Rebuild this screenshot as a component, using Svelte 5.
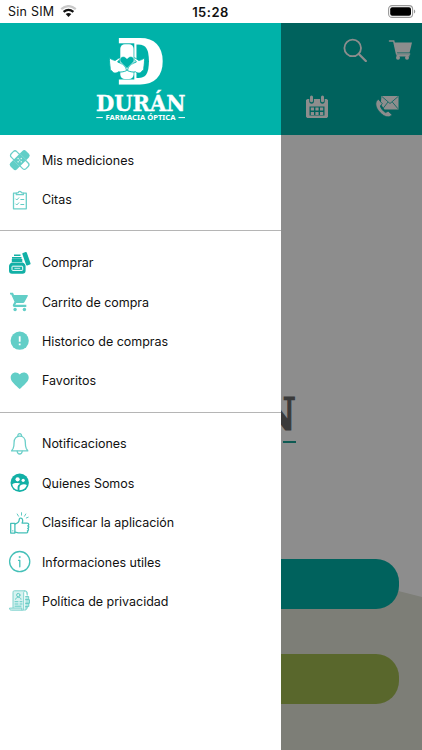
<script>
  // Secciones del menú lateral
  const sections = [
    [
      { icon: "bandage", label: "Mis mediciones" },
      { icon: "clipboard", label: "Citas" }
    ],
    [
      { icon: "jar", label: "Comprar" },
      { icon: "cart", label: "Carrito de compra" },
      { icon: "alert", label: "Historico de compras" },
      { icon: "heart", label: "Favoritos" }
    ],
    [
      { icon: "bell", label: "Notificaciones" },
      { icon: "people", label: "Quienes Somos" },
      { icon: "thumb", label: "Clasificar la aplicación" },
      { icon: "info", label: "Informaciones utiles" },
      { icon: "policy", label: "Política de privacidad" }
    ]
  ];
</script>

{#snippet menuIcon(name)}
  <svg class="icon" viewBox="0 0 24 24" width="24" height="24" aria-hidden="true">
    {#if name === "bandage"}
      <g transform="translate(-0.3 0.1) rotate(45 12 12)">
        <rect x="1.5" y="8.1" width="21" height="7.8" rx="2.4" class="line bold light-line" />
      </g>
      <g transform="translate(-0.3 0.1) rotate(-45 12 12)">
        <rect x="1" y="7.4" width="22" height="9.2" rx="2.6" class="light" />
        <path d="M7.3 7.4v9.2M16.7 7.4v9.2" stroke="#8fdcd7" stroke-width="0.6" />
        <g fill="#e8faf8">
          <circle cx="12" cy="9.8" r="0.7" /><circle cx="12" cy="14.2" r="0.7" />
          <circle cx="9.8" cy="12" r="0.7" /><circle cx="14.2" cy="12" r="0.7" />
          <circle cx="12" cy="12" r="0.6" />
        </g>
      </g>
    {:else if name === "clipboard"}
      <path d="M8.2 5.2H5.5v15.6h12.8V5.2h-2.7" class="line bold light-line" />
      <path d="M8.3 6.7V5.1l2-.5c.2-1.700 2.900-1.700 3.100 0l2 .5v1.600z" class="line bold light-line" />
      <path d="M7.800 11l1 1 2-2.200M7.800 16l1 1 2-2.200M12.800 11.500h3M12.800 16.500h3" class="line" />
    {:else if name === "jar"}
      <g class="dark">
        <path d="M6 3.500h6.500v1.400H6zM4 6h9.500v1.700H4z" />
        <path d="M3.800 8h10.500v3H3.800z" />
        <path d="M3.800 11.500h11c1.900.9 2.800 2.200 2.800 4v4.200c0 1.900-1.200 3-3 3H4c-1.900 0-3-1.100-3-3v-4.200c0-1.800.9-3.100 2.800-4z" />
        <rect x="16.100" y="1.100" width="4.700" height="13.200" rx="1" transform="rotate(-19 18.500 7.700)" />
      </g>
      <rect x="4" y="15.200" width="10.700" height="4.200" rx="0.700" fill="none" stroke="#fff" />
      <path d="M6.400 17.300h5.800" stroke="#fff" stroke-width="0.800" />
    {:else if name === "cart"}
      <path d="M2 2.800h3l1 2.300h13.200c.5 0 .8.5.6 1l-3.300 6c-.3.600-.8.900-1.500.9H8.300l-1 1.800h11V17H6.400c-1.300 0-2-1.400-1.400-2.500l1.500-2.700L3.200 4.400H2z" class="light" />
      <circle cx="7.100" cy="19.500" r="1.700" class="light" />
      <circle cx="16.400" cy="19.500" r="1.700" class="light" />
    {:else if name === "alert"}
      <circle cx="11.700" cy="11.700" r="9.100" class="light" />
      <path d="M10.800 7.300h1.800v5.500h-1.800zM10.800 14.400h1.800v1.800h-1.800z" fill="#fff" />
    {:else if name === "heart"}
      <path d="M11.700 20.100l-1.300-1.200C5.700 14.700 2.700 12 2.700 8.600c0-2.800 2.100-5 4.900-5 1.600 0 3.100.8 4.100 2 1-1.200 2.500-2 4.100-2 2.800 0 4.900 2.200 4.900 5 0 3.400-3 6.100-7.700 10.300z" class="light" />
    {:else if name === "bell"}
      <path d="M5.100 16.500c.8-1.600 1-3.500 1-6.200 0-3.500 2.100-6.100 5.600-6.100s5.600 2.600 5.600 6.100c0 2.700.2 4.600 1 6.200l1.500 2.400H3.600z" class="line bold light-line" />
      <path d="M9.900 4.400c-.8-3.600 4.400-3.600 3.600 0M9.200 19.200c.4 3.700 4.600 3.700 5 0" class="line bold light-line" />
    {:else if name === "people"}
      <circle cx="11.700" cy="11.700" r="9.200" class="dark" />
      <g fill="#fff">
        <circle cx="9.600" cy="8.300" r="2.100" />
        <circle cx="15.200" cy="9.300" r="1.600" />
        <path d="M4.300 13.200c1.300-1.600 6.400-1.700 8-.5-1.900.8-2.700 2-2.700 3.700v2.500c-2.900-.7-5.100-2.900-5.300-5.700z" />
        <path d="M11.500 19.200v-2.800c0-3.300 5.400-4 7.300-2.400-.8 3-3.600 5.300-7.300 5.200z" />
      </g>
    {:else if name === "thumb"}
      <path d="M2.700 12.300h4.200v9.800H2.700z" class="line bold" />
      <path d="M7 13c3.300-.7 4.200-2.400 4.300-4.700.1-1.900 3.400-1.500 3.400 1.100 0 1.100-.3 2-.6 2.700h5c2.100 0 2.100 2.500.6 2.700 1.500.2 1.400 2.400 0 2.600 1.200.3 1 2.300-.3 2.500.7.600.4 2-1 2H11c-1.600 0-2-.8-4-.8" class="line bold" />
      <path d="M13.500 1.700v2.500M9.200 3l1.300 2.200M17.800 3l-1.300 2.200M18.300 7l1.900-.8M4.800 19.500v.6" class="line" />
    {:else if name === "info"}
      <circle cx="11.700" cy="11.600" r="10.100" class="line bold" />
      <circle cx="11.700" cy="7.100" r="1.100" class="light" />
      <path d="M10.500 10.300h1.300v6.500" class="line bold" />
    {:else}
      <path d="M5 19V3.300C5 2.300 5.500 1.800 6.500 1.800h10.700c-1.100.3-1.500 1-1.500 2v17.400H3.300c-1.300 0-1.800-.8-1.800-2.100h12.300v2.100" fill="#d7f2f0" stroke="#74cec8" stroke-width="0.900" />
      <circle cx="10.300" cy="6.100" r="1.700" class="line" />
      <path d="M7.600 10.200c.3-2.700 5.100-2.700 5.400 0M7 12.700h3M12 12.700h2M7 15h3M12 15h2M7 17.200h6" class="line" />
      <path d="M17.200 2c1.300 0 2 .7 2 2v2.500M17.300 7.500h3.400v3h-3.400M17.400 10.700h4.100v3.600h-4.100M17.300 14.400h3.500v3.200h-3.500M17.300 17.700h2c0 2-.7 3.300-2.900 3.500" fill="#b0e6e2" stroke="#65cbc4" stroke-width="0.900" />
    {/if}
  </svg>
{/snippet}

<div class="phone">
  <div class="status">
    <div class="carrier">
      <span>Sin SIM</span>
      <svg width="17" height="13" viewBox="0 0 17 13" aria-hidden="true">
        <path d="M1.200 4.200Q8.500-2 15.800 4.200" fill="none" stroke="#c9c9c9" stroke-width="2.200" />
        <path d="M3.600 6.800q4.900-4 9.800 0" fill="none" stroke="#111" stroke-width="2.200" />
        <path d="M5.700 9.100q2.800-2.100 5.600 0L8.500 12z" fill="#111" />
      </svg>
    </div>
    <div class="time">15:28</div>
    <svg class="battery" width="28" height="13" viewBox="0 0 28 13" aria-hidden="true">
      <rect x="0.600" y="0.600" width="24" height="11.800" rx="3.500" fill="none" stroke="#999" stroke-width="1.100" />
      <rect x="2.200" y="2.200" width="20.800" height="8.600" rx="2" fill="#000" />
      <path d="M26 4.500c1.700.6 1.700 3.400 0 4z" fill="#999" />
    </svg>
  </div>

  <div class="app">
    <div class="page">
      <header class="topbar">
        <div class="tools">
          <svg width="24" height="24" viewBox="0 0 24 24" aria-hidden="true">
            <circle cx="9.700" cy="9.900" r="8.300" fill="none" stroke="#fff" stroke-width="1.800" />
            <path d="M15.800 16l7 7" stroke="#fff" stroke-width="2.300" stroke-linecap="round" />
          </svg>
          <svg width="24" height="24" viewBox="0 0 24 24" aria-hidden="true">
            <path d="M1.500 2.900h4.200L8.600 16h13" fill="none" stroke="#fff" stroke-width="1.500" stroke-linecap="round" />
            <path d="M5.900 4.400h18.100l-2.400 10.200H8.200z" fill="#fff" />
            <path d="M8.500 16.500h13v2h-13z" fill="#fff" />
            <circle cx="10" cy="19.800" r="2" fill="#fff" />
            <circle cx="19" cy="19.800" r="2" fill="#fff" />
          </svg>
        </div>
        <div class="tools second">
          <svg width="22" height="24" viewBox="0 0 22 24" aria-hidden="true">
            <path d="M1.500 4h1.800v2.500c0 3 4.600 3 4.600 0V4h6.200v2.500c0 3 4.600 3 4.600 0V4h1.800L22 5v16.800l-1.200 1.200H1.200L0 21.800V5z" fill="#fff" />
            <rect x="4" y="0.600" width="3" height="6.700" rx="1.500" fill="#fff" />
            <rect x="15" y="0.600" width="3" height="6.700" rx="1.500" fill="#fff" />
            <path d="M3.500 11.500h15v9h-15z" class="teal" />
            <path d="M4.800 12.500h3.200v3H4.800zM9.400 12.500h3.200v3H9.400zM14 12.500h3.200v3H14zM4.800 17h3.200v3H4.800zM9.400 17h3.200v3H9.400zM14 17h3.200v3H14z" fill="#fff" />
          </svg>
          <svg width="24" height="24" viewBox="0 0 24 24" aria-hidden="true">
            <path d="M6.500 1h17v13.500h-14L5.700 9z" fill="#fff" />
            <path d="M7 1.600l8 6.900 8-6.900M7.800 13.800L13 7M23 13.800L17.300 7" fill="none" class="seam" />
            <path d="M3.300 4.200C-.5 6.700.1 12.500 5 17.500c4.500 4.700 9.300 5.800 12 2.200l-3.800-3.500-2.700 1.400C7.400 15.500 6 13.300 5.300 11l2-2.300z" fill="#fff" class="seam" />
          </svg>
        </div>
      </header>

      <main class="home">
        <svg class="hill" viewBox="0 0 422 200" preserveAspectRatio="none" aria-hidden="true">
          <path d="M0 200V34Q120 0 240 10Q330 22 422 47V200z" fill="#e2e4d7" />
        </svg>
        <svg class="brand" width="172" height="54" viewBox="0 0 172 54">
          <text x="1" y="37.500" textLength="170" lengthAdjust="spacingAndGlyphs">DURÁN</text>
          <path d="M1 50h13M158 50h13" stroke="#1aa497" stroke-width="1.800" />
        </svg>
        <div class="actions">
          <div class="action"></div>
          <div class="action green"></div>
        </div>
      </main>
    </div>

    <div class="scrim"></div>

    <nav class="drawer">
      <div class="drawer-head">
        <svg width="96" height="92" viewBox="93 34 96 92">
          <text class="mark" transform="translate(117.800 83.200) scale(0.880 1)" x="0" y="0">D</text>
          <path d="M114 43.300h20.300v36.200H114z" fill="#00b2a9" />
          <rect x="120.300" y="44.300" width="13.300" height="34.700" rx="4.500" fill="#fff" />
          <!-- manos que sostienen el corazón -->
          <g fill="#fff" stroke="#00b2a9" stroke-width="0.900">
            <path d="M109.800 57.800c1.500 1.600 3.300 2.300 5.400 2.600l3.700-2.400c.9-.4 1.700.5 1 1.300l-2.300 2.700 2.900 1.200c3.200 1.400 5.500 3.700 6.100 7.400-3.300 1.500-6 1.600-8.100 1.200-2.800 2.200-5.600 1.200-6.600-.8-1.300-.4-1.900-1.600-1.700-3 -.3-3.500-1.100-6.400-.4-10.200z" />
            <path d="M144.200 57.800c-1.500 1.600-3.300 2.300-5.400 2.600l-3.700-2.400c-.9-.4-1.700.5-1 1.300l2.300 2.700-2.900 1.200c-3.200 1.400-5.500 3.700-6.100 7.400 3.300 1.500 6 1.600 8.100 1.200 2.800 2.200 5.600 1.200 6.600-.8 1.300-.4 1.900-1.600 1.700-3 .3-3.500 1.100-6.400.4-10.200z" />
          </g>
          <path d="M127 68.500l-6-5.900c-3-3.500 1-8 4.600-5.200l1.400 1.400 1.400-1.400c3.600-2.800 7.600 1.700 4.600 5.200z" fill="#00b2a9" stroke="#fff" stroke-width="0.500" />
          <text class="name" x="96" y="111" textLength="89.500" lengthAdjust="spacingAndGlyphs">DURÁN</text>
          <text class="tag" x="105.500" y="120.200" textLength="70" lengthAdjust="spacingAndGlyphs">FARMACIA ÓPTICA</text>
          <path d="M96.300 117.600h6.500M178.500 117.600h6.500" stroke="#fff" stroke-width="1" />
        </svg>
      </div>
      {#each sections as items}
        <ul class="section">
          {#each items as item}
            <li>
              {@render menuIcon(item.icon)}
              <span>{item.label}</span>
            </li>
          {/each}
        </ul>
      {/each}
    </nav>
  </div>
</div>

<style>
  :global(body) {
    margin: 0;
  }
  .phone {
    display: flex;
    flex-direction: column;
    width: 422px;
    height: 750px;
    overflow: hidden;
    background: #fff;
    color: #111;
    font-family: Inter, "Liberation Sans", sans-serif;
  }
  svg {
    display: block;
    flex: none;
  }

  /* Barra de estado */
  .status {
    display: grid;
    grid-template-columns: 1fr auto 1fr;
    align-items: center;
    height: 23px;
    padding: 0 6px 0 8px;
    box-sizing: border-box;
    font-size: 12.5px;
  }
  .carrier {
    display: flex;
    align-items: center;
    gap: 6px;
    letter-spacing: 0.25px;
  }
  .time {
    margin-left: -3px;
    font-size: 13px;
    font-weight: 600;
    letter-spacing: 0.5px;
  }
  .battery {
    justify-self: end;
  }

  .app {
    position: relative;
    flex: 1;
  }
  .page {
    display: flex;
    flex-direction: column;
    height: 100%;
  }

  /* Cabecera de la página */
  .topbar {
    height: 112px;
    background: #00b2a9;
  }
  .tools {
    display: flex;
    justify-content: flex-end;
    gap: 21px;
    padding: 15px 10px 0 0;
  }
  .second {
    gap: 47px;
    padding: 33px 23px 0 0;
  }
  .teal {
    fill: #00b2a9;
  }
  .seam {
    stroke: #00b2a9;
    stroke-width: 0.8;
  }

  .home {
    display: flex;
    flex-direction: column;
    justify-content: space-between;
    position: relative;
    flex: 1;
  }
  .hill {
    position: absolute;
    left: 0;
    bottom: 0;
    width: 100%;
    height: 200px;
  }
  .brand {
    align-self: center;
    margin-top: 257px;
    overflow: visible;
  }
  .brand text {
    font: bold 44px "DejaVu Serif", serif;
    fill: #69696a;
    stroke: #69696a;
    stroke-width: 1.2;
  }
  .actions {
    display: flex;
    flex-direction: column;
    gap: 45px;
    position: relative;
    padding: 0 23px 46px;
  }
  .action {
    height: 50px;
    border-radius: 23px;
    background: #00b2a9;
  }
  .green {
    background: #a1ba50;
  }
  .scrim {
    position: absolute;
    inset: 0;
    background: rgba(0, 0, 0, 0.447);
  }

  /* Menú lateral */
  .drawer {
    position: absolute;
    top: 0;
    bottom: 0;
    left: 0;
    width: 281px;
    background: #fff;
  }
  .drawer-head {
    display: flex;
    justify-content: center;
    height: 112px;
    padding-top: 11px;
    box-sizing: border-box;
    background: #00b2a9;
  }
  .drawer-head svg {
    overflow: visible;
  }
  .mark {
    font: bold 60px "DejaVu Serif", serif;
    fill: #fff;
    stroke: #fff;
    stroke-width: 3;
  }
  .name {
    font: bold 22px "DejaVu Serif", serif;
    fill: #fff;
    stroke: #fff;
    stroke-width: 0.4;
  }
  .tag {
    font: bold 6.7px "Noto Sans", sans-serif;
    fill: #fff;
  }
  .section {
    margin: 0;
    padding: 11.5px 0 11.2px;
    list-style: none;
    border-bottom: 1px solid #b5b5b5;
  }
  .drawer-head + .section {
    padding-top: 5.5px;
  }
  .section:last-child {
    border-bottom: none;
  }
  li {
    display: flex;
    align-items: center;
    gap: 10px;
    height: 39.4px;
    padding-left: 8px;
    font-size: 12.5px;
    letter-spacing: -0.02px;
  }
  .light {
    fill: #62cec7;
  }
  .dark {
    fill: #12b0a6;
  }
  .line {
    fill: none;
    stroke: #62cbc4;
    stroke-width: 1;
    stroke-linejoin: round;
    stroke-linecap: round;
  }
  .bold {
    stroke: #45c0b8;
    stroke-width: 1.3;
  }
  .light-line {
    stroke: #6bcfc9;
  }
</style>
